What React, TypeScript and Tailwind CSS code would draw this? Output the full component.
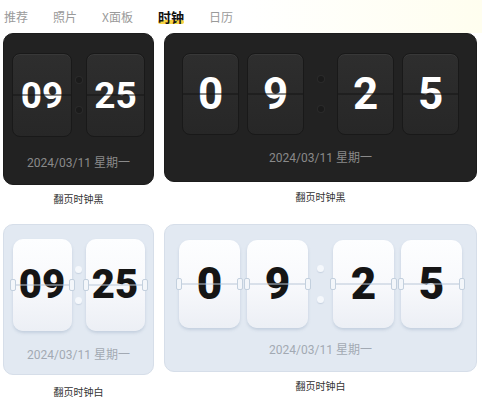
import type { ReactNode } from "react";

// Clock widget picker — flip clocks in dark and light, small and wide.

const TABS = ["推荐", "照片", "X面板", "时钟", "日历"];
const ACTIVE = "时钟";
const DATE = "2024/03/11 星期一";

const digitFont = { fontFamily: "Roboto, 'Noto Sans CJK SC', sans-serif" };

type Theme = "dark" | "light";

function Flap({ theme, w, h, size, children }: { theme: Theme; w: string; h: string; size: string; children: ReactNode }) {
  if (theme === "dark") {
    return (
      <div className={`relative ${w} ${h} shrink-0 rounded-[8px] border border-[#191919] bg-gradient-to-b from-[#2e2e2e] to-[#272727] shadow-[inset_0_1px_0_rgba(255,255,255,0.05)]`}>
        <div className="absolute inset-0 flex items-center justify-center">
          <span className={`${size} font-bold leading-none text-white`} style={digitFont}>
            {children}
          </span>
        </div>
        <div className="absolute left-0 right-0 top-1/2 h-px -translate-y-1/2 bg-[#141414]" />
      </div>
    );
  }
  return (
    <div className={`relative ${w} ${h} shrink-0 rounded-[10px] bg-gradient-to-b from-[#fdfeff] via-[#f8f9fc] to-[#eceff5] shadow-[0_2px_3px_rgba(140,160,185,0.35)]`}>
      <div className="absolute inset-0 flex items-center justify-center">
        <span className={`${size} font-black leading-none text-[#151515]`} style={digitFont}>
          {children}
        </span>
      </div>
      <div className="absolute left-0 right-0 top-1/2 h-px -translate-y-1/2 bg-[#b9c8d8]" />
      <div className="absolute -left-[3px] top-1/2 h-[12px] w-[6px] -translate-y-1/2 rounded-[2px] border border-[#c3d0de] bg-[#f3f6fa]" />
      <div className="absolute -right-[3px] top-1/2 h-[12px] w-[6px] -translate-y-1/2 rounded-[2px] border border-[#c3d0de] bg-[#f3f6fa]" />
    </div>
  );
}

function Dots({ theme, w }: { theme: Theme; w: string }) {
  const dot =
    theme === "dark"
      ? "h-[6px] w-[6px] rounded-full bg-[#1b1b1b] shadow-[0_0_0_1px_rgba(255,255,255,0.04)]"
      : "h-[7px] w-[7px] rounded-full bg-[#f5f8fc] shadow-[0_1px_1px_rgba(140,160,185,0.3)]";
  return (
    <div className={`flex ${w} shrink-0 flex-col items-center justify-center gap-[24px]`}>
      <span className={dot} />
      <span className={dot} />
    </div>
  );
}

function Card({ theme, wide }: { theme: Theme; wide: boolean }) {
  const dark = theme === "dark";
  const shell = dark
    ? "bg-[#222222] border border-[#1c1c1c]"
    : "bg-[#e2e9f2] border border-[#d6dee9]";
  const dateColor = dark ? "text-[#8a8a8a]" : "text-[#a2a9b3]";

  let pad = "";
  let clock: ReactNode;
  let dateMt = "";
  if (!wide && dark) {
    pad = "pt-[19px] pb-[13px]";
    dateMt = "mt-[18px]";
    clock = (
      <div className="flex justify-center">
        <Flap theme={theme} w="w-[60px]" h="h-[84px]" size="text-[37px]">09</Flap>
        <Dots theme={theme} w="w-[14px]" />
        <Flap theme={theme} w="w-[59px]" h="h-[84px]" size="text-[37px]">25</Flap>
      </div>
    );
  } else if (!wide) {
    pad = "pt-[14px] pb-[11px]";
    dateMt = "mt-[16px]";
    clock = (
      <div className="flex justify-center">
        <Flap theme={theme} w="w-[59px]" h="h-[92px]" size="text-[40px]">09</Flap>
        <Dots theme={theme} w="w-[14px]" />
        <Flap theme={theme} w="w-[59px]" h="h-[92px]" size="text-[40px]">25</Flap>
      </div>
    );
  } else if (dark) {
    pad = "pt-[19px] pb-[15px]";
    dateMt = "mt-[15px]";
    clock = (
      <div className="flex justify-center">
        <div className="flex gap-[8px]">
          <Flap theme={theme} w="w-[57px]" h="h-[82px]" size="text-[44px]">0</Flap>
          <Flap theme={theme} w="w-[57px]" h="h-[82px]" size="text-[44px]">9</Flap>
        </div>
        <Dots theme={theme} w="w-[33px]" />
        <div className="flex gap-[8px]">
          <Flap theme={theme} w="w-[57px]" h="h-[82px]" size="text-[44px]">2</Flap>
          <Flap theme={theme} w="w-[57px]" h="h-[82px]" size="text-[44px]">5</Flap>
        </div>
      </div>
    );
  } else {
    pad = "pt-[15px] pb-[13px]";
    dateMt = "mt-[14px]";
    clock = (
      <div className="flex justify-center">
        <div className="flex gap-[7px]">
          <Flap theme={theme} w="w-[61px]" h="h-[88px]" size="text-[44px]">0</Flap>
          <Flap theme={theme} w="w-[61px]" h="h-[88px]" size="text-[44px]">9</Flap>
        </div>
        <Dots theme={theme} w="w-[25px]" />
        <div className="flex gap-[7px]">
          <Flap theme={theme} w="w-[61px]" h="h-[88px]" size="text-[44px]">2</Flap>
          <Flap theme={theme} w="w-[61px]" h="h-[88px]" size="text-[44px]">5</Flap>
        </div>
      </div>
    );
  }

  return (
    <div className={`rounded-[10px] ${shell} ${pad}`}>
      {clock}
      <div className={`${dateMt} text-center text-[12px] leading-[16px] ${dateColor}`} style={digitFont}>
        {DATE}
      </div>
    </div>
  );
}

function Label({ children, mt }: { children: ReactNode; mt: string }) {
  return (
    <div className={`${mt} text-center text-[10px] leading-[14px] text-[#333333]`} style={digitFont}>
      {children}
    </div>
  );
}

export default function App() {
  return (
    <div
      className="h-[397px] w-[482px] overflow-hidden bg-white"
      style={{ fontFamily: "'Noto Sans CJK SC', 'Noto Sans', sans-serif" }}
    >
      <div className="flex h-[33px] items-start gap-[25px] bg-gradient-to-r from-white via-white to-[#fffeef] pl-[4px] pt-[8px]">
        {TABS.map((t) =>
          t === ACTIVE ? (
            <span key={t} className="relative text-[13px] font-bold leading-[17px] text-[#111111]">
              <span className="absolute bottom-[1px] left-0 right-0 h-[4px] rounded-full bg-[#f8d443]" />
              <span className="relative">{t}</span>
            </span>
          ) : (
            <span key={t} className="pt-[1px] text-[12px] leading-[16px] text-[#9a9a9a]">
              {t}
            </span>
          )
        )}
      </div>

      <div className="grid grid-cols-[151px_313px] gap-x-[10px] pl-[3px]">
        <div className="h-[191px]">
          <Card theme="dark" wide={false} />
          <Label mt="mt-[8px]">翻页时钟黑</Label>
        </div>
        <div className="h-[191px]">
          <Card theme="dark" wide />
          <Label mt="mt-[9px]">翻页时钟黑</Label>
        </div>
        <div>
          <Card theme="light" wide={false} />
          <Label mt="mt-[11px]">翻页时钟白</Label>
        </div>
        <div>
          <Card theme="light" wide />
          <Label mt="mt-[8px]">翻页时钟白</Label>
        </div>
      </div>
    </div>
  );
}
